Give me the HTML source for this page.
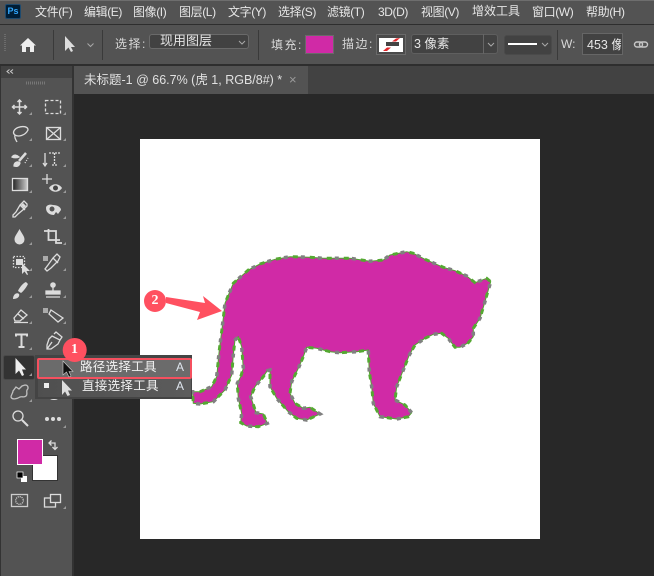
<!DOCTYPE html>
<html><head><meta charset="utf-8"><style>
*{box-sizing:border-box}
html,body{margin:0;padding:0;width:654px;height:576px;overflow:hidden;background:#282828}
body{position:relative;font-family:"Liberation Sans","Noto Sans CJK SC",sans-serif;color:#e6e6e6}
.a{position:absolute}
.t{position:absolute;white-space:nowrap;font-size:12px;line-height:16px}
.m{letter-spacing:-.4px}
</style></head><body>
<div class="a" style="left:0;top:0;width:654px;height:1px;background:#6e6e6e"></div>
<div class="a" style="left:0;top:1px;width:654px;height:23px;background:#535353"></div>
<div class="a" style="left:0;top:24px;width:654px;height:1px;background:#2e2e2e"></div>
<div class="a" style="left:0;top:25px;width:654px;height:39px;background:#535353"></div>
<div class="a" style="left:0;top:64px;width:654px;height:2px;background:#2e2e2e"></div>
<div class="a" style="left:0;top:66px;width:654px;height:28px;background:#424242"></div>
<div class="a" style="left:74px;top:66px;width:234px;height:28px;background:#535353"></div>
<div class="a" style="left:0;top:66px;width:72px;height:510px;background:#535353"></div>
<div class="a" style="left:0;top:66px;width:72px;height:12px;background:#424242"></div>
<div class="a" style="left:72px;top:66px;width:2px;height:510px;background:#333"></div>
<div class="a" style="left:0;top:66px;width:1px;height:510px;background:#333"></div>
<div class="a" style="left:140px;top:139px;width:400px;height:400px;background:#fff"></div>

<div class="a" style="left:5px;top:4px;width:16px;height:15px;background:#001e36;border-radius:2px;border:1px solid #1d4a6e;color:#31a8ff;font-size:9px;line-height:13px;font-weight:bold;text-align:center">Ps</div>
<div class="t m" style="left:35px;top:4px">文件(F)</div>
<div class="t m" style="left:84px;top:4px">编辑(E)</div>
<div class="t m" style="left:133px;top:4px">图像(I)</div>
<div class="t m" style="left:179px;top:4px">图层(L)</div>
<div class="t m" style="left:228px;top:4px">文字(Y)</div>
<div class="t m" style="left:278px;top:4px">选择(S)</div>
<div class="t m" style="left:327px;top:4px">滤镜(T)</div>
<div class="t m" style="left:378px;top:4px">3D(D)</div>
<div class="t m" style="left:421px;top:4px">视图(V)</div>
<div class="t" style="left:472px;top:3px">增效工具</div>
<div class="t m" style="left:532px;top:4px">窗口(W)</div>
<div class="t m" style="left:586px;top:4px">帮助(H)</div>

<div class="t" style="left:115px;top:36px;letter-spacing:1.5px;color:#d8d8d8">选择:</div>
<div class="a" style="left:149px;top:34px;width:100px;height:15px;background:#424242;border:1px solid #6a6a6a;border-radius:3px"></div>
<div class="t" style="left:160px;top:33px;font-size:13px">现用图层</div>
<div class="t" style="left:271px;top:37px;letter-spacing:1.5px;color:#d8d8d8">填充:</div>
<div class="a" style="left:305px;top:35px;width:29px;height:19px;background:#d02aa6;border:1px solid #6a6a6a"></div>
<div class="t" style="left:342px;top:36px;letter-spacing:1.5px;color:#d8d8d8">描边:</div>
<div class="a" style="left:376px;top:34px;width:30px;height:21px;background:#4a4a4a;border:1px solid #6a6a6a"></div>
<div class="a" style="left:379px;top:38px;width:24px;height:14px;background:#fff"></div>
<div class="a" style="left:411px;top:34px;width:87px;height:20px;background:#424242;border:1px solid #5f5f5f;border-radius:3px"></div>
<div class="a" style="left:483px;top:34px;width:1px;height:20px;background:#666"></div>
<div class="t" style="left:414px;top:36px;font-size:12.5px">3 像素</div>
<div class="a" style="left:504px;top:35px;width:48px;height:20px;background:#424242;border:1px solid #4a4a4a;border-radius:3px"></div>
<div class="a" style="left:508px;top:43px;width:29px;height:2px;background:#fff"></div>
<div class="t" style="left:561px;top:36px;font-size:12px;color:#d8d8d8">W:</div>
<div class="a" style="left:582px;top:33px;width:41px;height:22px;background:#424242;border:1px solid #666"></div>
<div class="t" style="left:587px;top:37px;font-size:12.5px;width:34px;overflow:hidden">453 像</div>

<div class="t" style="left:84px;top:72px;font-size:12.5px;color:#e0e0e0">未标题-1 @ 66.7% (虎 1, RGB/8#) *</div>
<div class="t" style="left:289px;top:72px;font-size:13px;color:#9a9a9a">×</div>

<svg class="a" style="left:0;top:0" width="654" height="576" viewBox="0 0 654 576">
<defs>
<linearGradient id="g" x1="0" x2="1" y1="0" y2="0"><stop offset="0" stop-color="#222"/><stop offset="1" stop-color="#ccc"/></linearGradient>
<path id="tg" d="M192.700 394L192.700 391.700L200 391.700L211.700 386.700L216.700 376.700L219.300 350L222.700 323.300L225 303.300L233.300 283.300L248.300 270L260 264L275 259.300L290 256.700L310 257.300L323.300 258.300L350 258.300L353.300 258.700L370 261.300L383.300 260L390 255L406.700 251.700L413.300 253.300L425 259.300L443.300 267.300L455 270.700L466.700 276L475 282.700L486.700 278.300L490.700 281.700L488.300 290L484 305L480 318.300L473.300 328.300L473.300 336.700L468.300 342.700L460 347.300L455 347.300L448.300 338.300L441.700 333.300L433.300 334.300L425 338.300L415 345L409.300 355L403.300 370L396.700 386.700L395 400L405 405L411.700 412.700L408.300 416.700L396.700 419L380 416.700L373.300 403.300L371.700 386.700L369.300 371.700L368.300 350L356.700 351.700L340 352.700L330 351.700L316.700 348.300L306.700 347.300L303.300 356.700L298.300 368.300L291.700 381.700L290 393.300L295 403.300L303.300 408.300L310 407.300L320 414L306.700 420L296.700 418.300L288.300 411.700L276.700 398.300L270 386.700L270 370L267.300 370.700L263.300 376.700L255 386.700L250.700 396.700L256 412.700L263.300 414L267.300 423.300L258.300 426.700L246.700 426L240.700 422.700L241.700 413.300L238.300 398.300L237.300 383.300L240.700 376.700L243.300 368.300L241.700 346.700L238.300 336.700L235 340L233.300 355L231.700 375L225 390L213.300 401.700L200 404L193.300 403.300Z"/>
</defs>
<!-- option bar -->
<path d="M53.500 30V60M102.500 30V60M258.500 30V60M557.500 30V60" fill="none" stroke="#3a3a3a"/>
<path d="M5 34V52" stroke="#6c6c6c" stroke-width="2" stroke-dasharray="1 1"/>
<path d="M20 45.500L28 38L36 45.500H34V52H30V47H26V52H22V45.500Z" fill="#eee"/>
<path d="M65 36V51L68.500 47.500L71 52L73 51L71 47H75Z" fill="#ddd"/>
<g fill="none" stroke="#a8a8a8" stroke-width="1">
<path d="M87.500 43.500L90.500 46.500L93.500 43.500"/><path d="M239 41L242 44L245 41"/><path d="M488 43L491 46L494 43"/><path d="M542 43L545 46L548 43"/>
</g>
<rect x="386" y="42" width="13" height="4" fill="#444"/>
<path d="M396 38.500L400 38L396 41.500L392 41.500ZM387 47.500L391 47.500L387 51L383 51Z" fill="#e0262a"/>
<g fill="none" stroke="#c8c8c8" stroke-width="1.400"><rect x="634.500" y="42" width="8" height="5" rx="2.500"/><rect x="639.500" y="42" width="8" height="5" rx="2.500"/></g>
<!-- toolbar top -->
<path d="M9.500 69.500L7 71.500L9.500 73.500M13 69.500L10.500 71.500L13 73.500" fill="none" stroke="#ccc" stroke-width="1"/>
<path d="M26 83H45" stroke="#777" stroke-width="3" stroke-dasharray="1 1"/>
<!-- active tool -->
<rect x="3.500" y="355.500" width="31" height="24" rx="2" fill="#333" stroke="#494949"/>
<ellipse cx="54" cy="394" rx="7" ry="6" fill="#ddd"/>
<!-- tools -->
<g fill="none" stroke="#dcdcdc" stroke-width="1.300">
<path d="M19.500 100V114M12.500 107H26.500M17.500 102L19.500 100L21.500 102M17.500 112L19.500 114L21.500 112M14.500 105L12.500 107L14.500 109M24.500 105L26.500 107L24.500 109" stroke-width="1.500"/>
<rect x="45.500" y="100.500" width="15" height="13" stroke-dasharray="3 2"/>
<path d="M28 130C28 126 22 126 18 127.500C14 129 12 133 15 135C18 137 25 136 28 130ZM15 135C14 138 16 140 17 142"/>
<rect x="46.500" y="127.500" width="14" height="12"/><path d="M46.500 127.500L60.500 139.500M60.500 127.500L46.500 139.500"/>
<path d="M26 153L19 161" stroke-width="2.500"/><path d="M12 157C14 154 17 155 19 157C17 158 14 158 12 157Z" fill="#dcdcdc"/><path d="M14 166C14 162 18 161 20 163C19 166 17 167 14 166Z" fill="#dcdcdc"/><path d="M25 163L28 158" stroke-dasharray="1 1.500"/>
<path d="M45 153V165M43 163L45 166L47 163"/><path d="M49 153H60M54.500 153V165M52 165H57" stroke-dasharray="2 1"/>
<rect x="12.500" y="178.500" width="15" height="12" fill="url(#g)" stroke="#ddd"/>
<path d="M42 179H52M47 174V184"/><path d="M49 188C52 183 59 183 62 188C59 193 52 193 49 188Z" fill="#dcdcdc" stroke="none"/><circle cx="55.500" cy="188" r="2.500" fill="#444" stroke="none"/>
<path d="M27 204L24 201L20 205L16 212L13 215L13 217L15 217L18 214L24 209L27 206Z M20 205L25 210"/>
<path d="M22 204L25 207" stroke-width="3"/>
<path d="M46 208C46 205 50 204 53 205C57 205 61 207 61 210L58 214L56 212L54 215C50 215 46 213 46 208Z" fill="#dcdcdc" stroke="none"/><circle cx="52" cy="209" r="2.500" fill="#535353" stroke="none"/>
<path d="M19.500 229C17 234 14.500 236 14.500 239.500A5 5 0 0 0 24.500 239.500C24.500 236 22 234 19.500 229Z" fill="#dcdcdc" stroke="none"/>
<path d="M44 231H56V243H62M48.500 229V240H60" stroke-width="1.800"/>
<rect x="13.500" y="256.500" width="11" height="11" stroke-dasharray="1.500 1.500"/><rect x="16" y="259" width="7" height="6" fill="#dcdcdc" stroke="none"/>
<path d="M22 263V274L24.500 271.500L27 275L28 274.500L26.500 271H30Z" fill="#dcdcdc" stroke="none"/>
<rect x="43" y="256" width="5" height="5" fill="#aaa" stroke="none"/>
<path d="M60 257L57 254L53 258L48 265L45 269L47 271L51 268L58 261ZM53 258L58 263"/>
<path d="M26 282C23 283 19 288 18 291L21 293C24 291 27 286 28 284Z" fill="#dcdcdc" stroke="none"/><path d="M13 299C13 294 17 292 19 294C20 296 18 299 13 299Z" fill="#dcdcdc" stroke="none"/>
<circle cx="53" cy="285" r="2.800" fill="#dcdcdc" stroke="none"/><path d="M53 287V291M46 291H60V294H46ZM46 297H60" fill="#dcdcdc"/>
<path d="M14 318L21 310L27 315L20 321H15Z M18 314L24 319 M14 322.500H28"/>
<path d="M51 310L63 318L58 322L49 314Z"/><rect x="43" y="308" width="5" height="5" fill="#aaa" stroke="none"/>
<path d="M16 336.500V334.500H27V336.500M21.500 334.500V347M18.500 347H24.500" stroke-width="2"/>
<path d="M52 336L60 340L58 344L51 349L47 349L47 345L49 339Z M54 334L56 332L62 337L60 340 M47 349L52 342"/>
<path d="M16 387L19 389L22 386L25 385C28 385 29 388 27 390C26 392 28 394 26 396C24 398 22 396 20 397C17 399 12 400 11 397C11 395 13 393 13 391Z" stroke="#c0c0c0"/>
<circle cx="18" cy="416" r="5"/><path d="M22 420L28 426" stroke-width="2"/>
<circle cx="47" cy="419" r="2" fill="#dcdcdc" stroke="none"/><circle cx="53" cy="419" r="2" fill="#dcdcdc" stroke="none"/><circle cx="59" cy="419" r="2" fill="#dcdcdc" stroke="none"/>
<path d="M49 443H55V449M52.500 447L55 449.500L57.500 447M51.500 440.500L49 443L51.500 445.500" stroke-width="1.300"/>
<rect x="11.500" y="494.500" width="16" height="12" stroke="#ccc"/><circle cx="19.500" cy="500.500" r="3.800" stroke-dasharray="1 1"/>
<rect x="44.500" y="498" width="11" height="9" fill="#535353"/><rect x="50.500" y="494.500" width="10" height="8" fill="#535353"/>
</g>
<path fill="#9a9a9a" d="M32 115V112L29 115ZM66 115V112L63 115ZM32 141V138L29 141ZM66 141V138L63 141ZM32 167V164L29 167ZM66 167V164L63 167ZM32 193V190L29 193ZM66 193V190L63 193ZM32 219V216L29 219ZM66 219V216L63 219ZM32 245V242L29 245ZM66 245V242L63 245ZM32 271V268L29 271ZM66 271V268L63 271ZM32 298V295L29 298ZM66 298V295L63 298ZM32 324V321L29 324ZM66 324V321L63 324ZM32 350V347L29 350ZM32 376V373L29 376ZM32 402V399L29 402ZM66 428V425L63 428ZM66 509V506L63 509Z"/>
<path d="M15.500 358V374L19 370.500L22 376L24 375L22 369.500H26Z" fill="#eee"/>
<!-- colours -->
<rect x="32.500" y="455.500" width="25" height="25" fill="#fff" stroke="#333"/>
<rect x="17.500" y="439.500" width="25" height="25" fill="#d02aa6" stroke="#fff"/>
<rect x="21" y="476" width="6" height="6" fill="#fff"/><rect x="17" y="472" width="6" height="6" fill="#000" stroke="#fff" stroke-width=".7"/>
<!-- tiger -->
<use href="#tg" fill="#d02aa6" stroke="#4fa82e" stroke-width="1"/>
<use href="#tg" fill="none" stroke="#808080" stroke-width="3.500" stroke-dasharray="4 13"/>
<use href="#tg" fill="none" stroke="#55a832" stroke-width="3" stroke-dasharray="5 12" stroke-dashoffset="8"/>
<!-- arrow annotation -->
<path d="M166 297L205 303L203 296L222 311L197 320L200 312L166 303Z" fill="#ff5060"/>
<circle cx="155" cy="301" r="11" fill="#ff5060"/>
</svg>

<!-- popup -->
<div class="a" style="left:35px;top:355px;width:157px;height:44px;background:#444"></div>
<div class="a" style="left:38px;top:379px;width:153px;height:18px;background:linear-gradient(90deg,#4f4f4f,#5c5c5c)"></div>
<div class="a" style="left:37px;top:358px;width:155px;height:21px;background:#6b6b6b;border:2px solid #f5505f;border-radius:2px"></div>
<div class="t" style="left:80px;top:359px;font-size:12.5px;letter-spacing:.3px;color:#f0f0f0">路径选择工具</div>
<div class="t" style="left:82px;top:378px;font-size:12.5px;letter-spacing:.3px;color:#f0f0f0">直接选择工具</div>
<div class="t" style="left:176px;top:359px;font-size:12px;color:#dfe6ef">A</div>
<div class="t" style="left:176px;top:378px;font-size:12px;color:#dfe6ef">A</div>
<div class="a" style="left:44px;top:383px;width:5px;height:5px;background:#eee"></div>
<svg class="a" style="left:0;top:0" width="654" height="576" viewBox="0 0 654 576">
<path d="M62 380V395L65 391.500L67.500 396L70 395L68 390.500H72Z" fill="#dedede"/>
<path d="M63 361V375L66.500 372L69 377L71 376L69 371.500H73Z" fill="#111" stroke="#ccc" stroke-width=".6"/>
<circle cx="74.700" cy="350" r="12" fill="#ff5060"/>
</svg>
<div class="t" style="left:64px;top:341px;width:21px;text-align:center;font-family:'Liberation Serif',serif;font-weight:bold;font-size:14px;line-height:18px;color:#fff">1</div>
<div class="t" style="left:144px;top:292px;width:22px;text-align:center;font-family:'Liberation Serif',serif;font-weight:bold;font-size:14px;line-height:18px;color:#fff">2</div>
</body></html>
